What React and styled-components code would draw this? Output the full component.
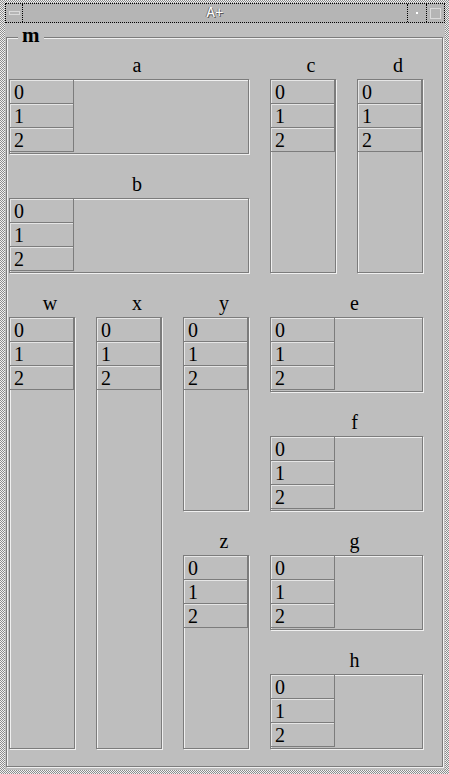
import React from 'react'
import styled, { createGlobalStyle } from 'styled-components'

const Global = createGlobalStyle`
    html, body {
        margin: 0;
        padding: 0;
        background: #bebebe;
    }
`

const widgets = [
    { name: 'a', col: 1, row: 1, cspan: 3, rspan: 1 },
    { name: 'b', col: 1, row: 2, cspan: 3, rspan: 1 },
    { name: 'c', col: 4, row: 1, cspan: 1, rspan: 2 },
    { name: 'd', col: 5, row: 1, cspan: 1, rspan: 2 },
    { name: 'w', col: 1, row: 3, cspan: 1, rspan: 4 },
    { name: 'x', col: 2, row: 3, cspan: 1, rspan: 4 },
    { name: 'y', col: 3, row: 3, cspan: 1, rspan: 2 },
    { name: 'z', col: 3, row: 5, cspan: 1, rspan: 2 },
    { name: 'e', col: 4, row: 3, cspan: 2, rspan: 1 },
    { name: 'f', col: 4, row: 4, cspan: 2, rspan: 1 },
    { name: 'g', col: 4, row: 5, cspan: 2, rspan: 1 },
    { name: 'h', col: 4, row: 6, cspan: 2, rspan: 1 },
]

const Widget = ({ name, col, row, cspan, rspan }) => (
    <Item $col={col} $row={row} $cspan={cspan} $rspan={rspan}>
        <Label>{name}</Label>
        <Box>
            <Cells>
                {[0, 1, 2].map(n => <Cell key={n}>{n}</Cell>)}
            </Cells>
        </Box>
    </Item>
)

export default function App() {
    return (
        <>
            <Global />
            <Window>
                <TitleBar>
                    <MenuBtn>
                        <svg width="11" height="4" viewBox="0 0 11 4">
                            <rect x="0.5" y="0.5" width="10" height="3" fill="none" stroke="#fff" strokeDasharray="1 1" />
                        </svg>
                    </MenuBtn>
                    <Title>A+</Title>
                    <SideBtn $w={18}>
                        <svg width="4" height="4" viewBox="0 0 4 4">
                            <rect x="1" y="1" width="2" height="2" fill="#fff" />
                        </svg>
                    </SideBtn>
                    <SideBtn $w={17}>
                        <svg width="11" height="11" viewBox="0 0 11 11">
                            <rect x="0.5" y="0.5" width="10" height="10" fill="none" stroke="#fff" strokeDasharray="1 1" />
                        </svg>
                    </SideBtn>
                </TitleBar>
                <Body>
                    <Frame>
                        <Legend>m</Legend>
                        <Grid>
                            {widgets.map(w => <Widget key={w.name} {...w} />)}
                        </Grid>
                    </Frame>
                </Body>
            </Window>
        </>
    )
}

const Window = styled.div`
    box-sizing: border-box;
    width: 449px;
    height: 774px;
    padding: 3px 4px 4px 5px;
    display: flex;
    flex-direction: column;
    background: repeating-conic-gradient(#f2f2f2 0 25%, #8c8c8c 0 50%) 0 0 / 2px 2px;
`
const TitleBar = styled.div`
    box-sizing: border-box;
    height: 20px;
    display: flex;
    border: 1px dotted #000;
    background: #b5b5b5;
`
const MenuBtn = styled.div`
    width: 16px;
    border-right: 1px dotted #000;
    display: flex;
    align-items: center;
    justify-content: center;
`
const Title = styled.div`
    flex: 1;
    text-align: center;
    color: #fff;
    font-family: "Liberation Mono", monospace;
    font-size: 14px;
    line-height: 18px;
    text-shadow: 1px 1px 0 #555, -1px 0 0 #777;
`
const SideBtn = styled.div`
    width: ${p => p.$w}px;
    border-left: 1px dotted #000;
    display: flex;
    align-items: center;
    justify-content: center;
`
const Body = styled.div`
    flex: 1;
    display: flex;
    flex-direction: column;
    background: #bebebe;
    padding: 14px 2px 3px 1px;
`
const Frame = styled.div`
    position: relative;
    flex: 1;
    border: 1px solid #7c7c7c;
    box-shadow: inset 1px 1px 0 #f0f0f0, 1px 1px 0 #f0f0f0;
    padding: 16px 0 0 2px;
`
const Legend = styled.span`
    position: absolute;
    top: -13px;
    left: 11px;
    padding: 0 4px;
    background: #bebebe;
    font-family: "Liberation Serif", serif;
    font-weight: bold;
    font-size: 21px;
    line-height: 20px;
    color: #000;
`
const Grid = styled.div`
    display: grid;
    grid-template-columns: repeat(5, 66px);
    grid-template-rows: repeat(6, 100px);
    column-gap: 21px;
    row-gap: 19px;
`
const Item = styled.div`
    grid-column: ${p => p.$col} / span ${p => p.$cspan};
    grid-row: ${p => p.$row} / span ${p => p.$rspan};
    display: flex;
    flex-direction: column;
`
const Label = styled.div`
    height: 25px;
    padding-left: 16px;
    text-align: center;
    font-family: "Liberation Serif", serif;
    font-size: 20px;
    line-height: 22px;
    color: #000;
`
const Box = styled.div`
    flex: 1;
    box-sizing: border-box;
    border: 1px solid #7c7c7c;
    box-shadow: inset 1px 1px 0 #f0f0f0, 1px 1px 0 #f0f0f0;
`
const Cells = styled.div`
    width: 64px;
    display: flex;
    flex-direction: column;
`
const Cell = styled.div`
    box-sizing: border-box;
    height: 24px;
    padding-left: 4px;
    border-right: 1px solid #7c7c7c;
    border-bottom: 1px solid #7c7c7c;
    box-shadow: inset 1px 1px 0 #e6e6e6;
    font-family: "Liberation Serif", serif;
    font-size: 20px;
    line-height: 24px;
    color: #000;
`
